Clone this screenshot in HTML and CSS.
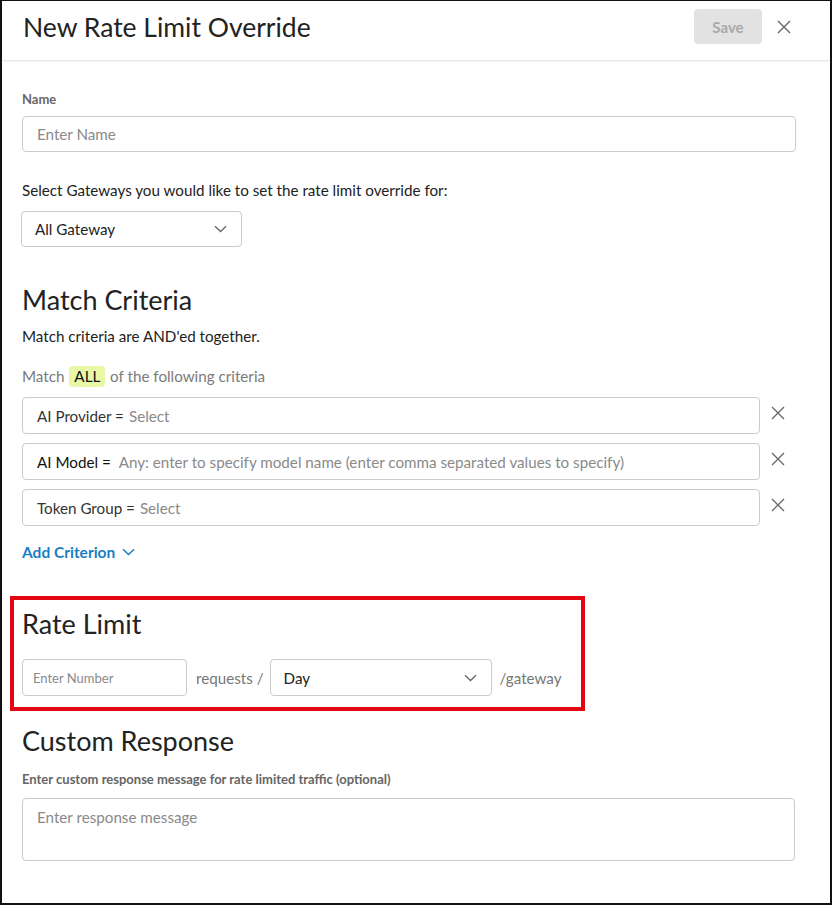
FILE: index.html
```html
<!DOCTYPE html>
<html lang="en">
<head>
<meta charset="utf-8">
<title>New Rate Limit Override</title>
<link rel="stylesheet" href="styles.css">
</head>
<body>
<div class="panel">
  <header class="panel-header">
    <h1 class="panel-title">New Rate Limit Override</h1>
    <button class="btn-save" disabled>Save</button>
    <button class="btn-close" aria-label="Close">
      <svg width="14" height="14" viewBox="0 0 14 14"><path d="M1 1L13 13M13 1L1 13" stroke="#666" stroke-width="1.4" fill="none"/></svg>
    </button>
  </header>

  <main class="panel-body">
    <label class="field-label">Name</label>
    <div class="input input-name"><span class="placeholder">Enter Name</span></div>

    <p class="text gateways-text">Select Gateways you would like to set the rate limit override for:</p>
    <div class="select select-gateway">
      <span>All Gateway</span>
      <svg class="chev" width="13" height="8" viewBox="0 0 13 8"><path d="M1 1.2L6.5 6.5L12 1.2" stroke="#666" stroke-width="1.3" fill="none"/></svg>
    </div>

    <h2 class="section-title match-title">Match Criteria</h2>
    <p class="text and-text">Match criteria are AND'ed together.</p>
    <p class="text match-all">Match <span class="tag-all">ALL</span> of the following criteria</p>

    <div class="criteria">
      <div class="crit-row">
        <div class="input crit"><span class="crit-key">AI Provider =</span><span class="placeholder">Select</span></div>
        <button class="crit-remove" aria-label="Remove"><svg width="14" height="14" viewBox="0 0 14 14"><path d="M1 1L13 13M13 1L1 13" stroke="#666" stroke-width="1.3" fill="none"/></svg></button>
      </div>
      <div class="crit-row">
        <div class="input crit"><span class="crit-key strong">AI Model =</span><span class="placeholder">Any: enter to specify model name (enter comma separated values to specify)</span></div>
        <button class="crit-remove" aria-label="Remove"><svg width="14" height="14" viewBox="0 0 14 14"><path d="M1 1L13 13M13 1L1 13" stroke="#666" stroke-width="1.3" fill="none"/></svg></button>
      </div>
      <div class="crit-row">
        <div class="input crit"><span class="crit-key">Token Group =</span><span class="placeholder">Select</span></div>
        <button class="crit-remove" aria-label="Remove"><svg width="14" height="14" viewBox="0 0 14 14"><path d="M1 1L13 13M13 1L1 13" stroke="#666" stroke-width="1.3" fill="none"/></svg></button>
      </div>
    </div>

    <a class="add-criterion">Add Criterion
      <svg width="13" height="8" viewBox="0 0 13 8"><path d="M1 1.2L6.5 6.5L12 1.2" stroke="#1a7ec2" stroke-width="1.5" fill="none"/></svg>
    </a>

    <section class="rate-box">
      <h2 class="section-title">Rate Limit</h2>
      <div class="rate-row">
        <div class="input input-number"><span class="placeholder small">Enter Number</span></div>
        <span class="muted requests">requests /</span>
        <div class="select select-period">
          <span>Day</span>
          <svg class="chev" width="13" height="8" viewBox="0 0 13 8"><path d="M1 1.2L6.5 6.5L12 1.2" stroke="#666" stroke-width="1.3" fill="none"/></svg>
        </div>
        <span class="muted">/gateway</span>
      </div>
    </section>

    <h2 class="section-title custom-title">Custom Response</h2>
    <label class="field-label custom-label">Enter custom response message for rate limited traffic (optional)</label>
    <div class="input textarea"><span class="placeholder">Enter response message</span></div>
  </main>
</div>
</body>
</html>
```

FILE: styles.css
```css
* { box-sizing: border-box; }

html, body {
  margin: 0;
  padding: 0;
  background: #fff;
}

body {
  font-family: Lato, "Open Sans", sans-serif;
  color: #222;
}

.panel {
  width: 832px;
  height: 905px;
  border: 2px solid #111;
  border-top-width: 1px;
  overflow: hidden;
  background: #fff;
}

/* header bar */
.panel-header {
  height: 59px;
  display: flex;
  align-items: center;
  padding: 0 36px 8px 21px;
  box-shadow: 0 1px 2px rgba(0, 0, 0, 0.14);
  position: relative;
}

.panel-title {
  margin: 0;
  font-size: 26.5px;
  font-weight: 400;
  color: #222;
}

.btn-save {
  margin-left: auto;
  width: 68px;
  height: 35px;
  border: none;
  border-radius: 4px;
  background: #e2e2e2;
  color: #a9a9a9;
  font-family: inherit;
  font-size: 15px;
  font-weight: 700;
}

.btn-close {
  margin-left: 12px;
  width: 20px;
  height: 20px;
  padding: 0;
  border: none;
  background: none;
  display: flex;
  align-items: center;
  justify-content: center;
}

/* body */
.panel-body {
  padding: 31px 34px 0 20px;
}

.field-label {
  display: block;
  font-size: 13px;
  line-height: 16px;
  font-weight: 700;
  color: #666;
}

.input {
  border: 1px solid #ccc;
  border-radius: 4px;
  display: flex;
  align-items: center;
  padding: 0 14px;
  font-size: 15.2px;
}

.placeholder {
  color: #8a8a8a;
}

.placeholder.small {
  font-size: 13px;
}

.input-name {
  margin-top: 9px;
  height: 36px;
}

.text {
  margin: 0;
  font-size: 15.2px;
  line-height: 20px;
  color: #222;
}

.gateways-text {
  margin-top: 28px;
}

.select {
  display: flex;
  align-items: center;
  justify-content: space-between;
  border: 1px solid #ccc;
  border-radius: 4px;
  height: 36px;
  padding: 0 14px 0 13px;
  font-size: 15.2px;
  color: #222;
}

.select-gateway {
  margin-top: 11px;
  width: 221px;
  margin-left: -1px;
}

.section-title {
  margin: 0;
  font-size: 27px;
  line-height: 32px;
  font-weight: 400;
  color: #222;
}

.match-title {
  margin-top: 37px;
}

.and-text {
  margin-top: 10px;
}

.match-all {
  margin-top: 20px;
  color: #7a7a7a;
}

.tag-all {
  display: inline-block;
  background: #e8f8a6;
  color: #111;
  border-radius: 4px;
  padding: 0 5px;
  line-height: 21px;
  margin: 0 1px;
}

/* criteria list */
.criteria {
  margin-top: 10px;
  display: flex;
  flex-direction: column;
  gap: 9px;
}

.crit-row {
  display: grid;
  grid-template-columns: 1fr 36px;
  align-items: center;
}

.crit {
  height: 37px;
}

.crit-key {
  color: #333;
  margin-right: 5px;
}

.crit-key.strong {
  color: #111;
  margin-right: 8px;
}

.crit-remove {
  border: none;
  background: none;
  padding: 0;
  margin-top: -5px;
  display: flex;
  justify-content: center;
}

.add-criterion {
  display: inline-flex;
  align-items: center;
  gap: 7px;
  margin-top: 16px;
  font-size: 15.5px;
  line-height: 20px;
  font-weight: 700;
  color: #1a7ec2;
}

/* highlighted rate limit block */
.rate-box {
  margin-top: 34px;
  margin-left: -12px;
  width: 575px;
  border: 4px solid #e30613;
  padding: 8px 18px 11px 8px;
}

.rate-row {
  margin-top: 19px;
  display: flex;
  align-items: center;
}

.input-number {
  flex: none;
  width: 165px;
  height: 37px;
  padding-left: 10px;
}

.muted {
  color: #777;
  font-size: 15.2px;
  white-space: nowrap;
}

.requests {
  margin: 0 6px 0 9px;
}

.select-period {
  flex: none;
  width: 222px;
  height: 37px;
  margin-right: 8px;
}

.custom-title {
  margin-top: 14px;
}

.custom-label {
  margin-top: 14px;
}

.textarea {
  margin-top: 11px;
  height: 63px;
  align-items: flex-start;
  padding-top: 9px;
  margin-right: 1px;
}
```
